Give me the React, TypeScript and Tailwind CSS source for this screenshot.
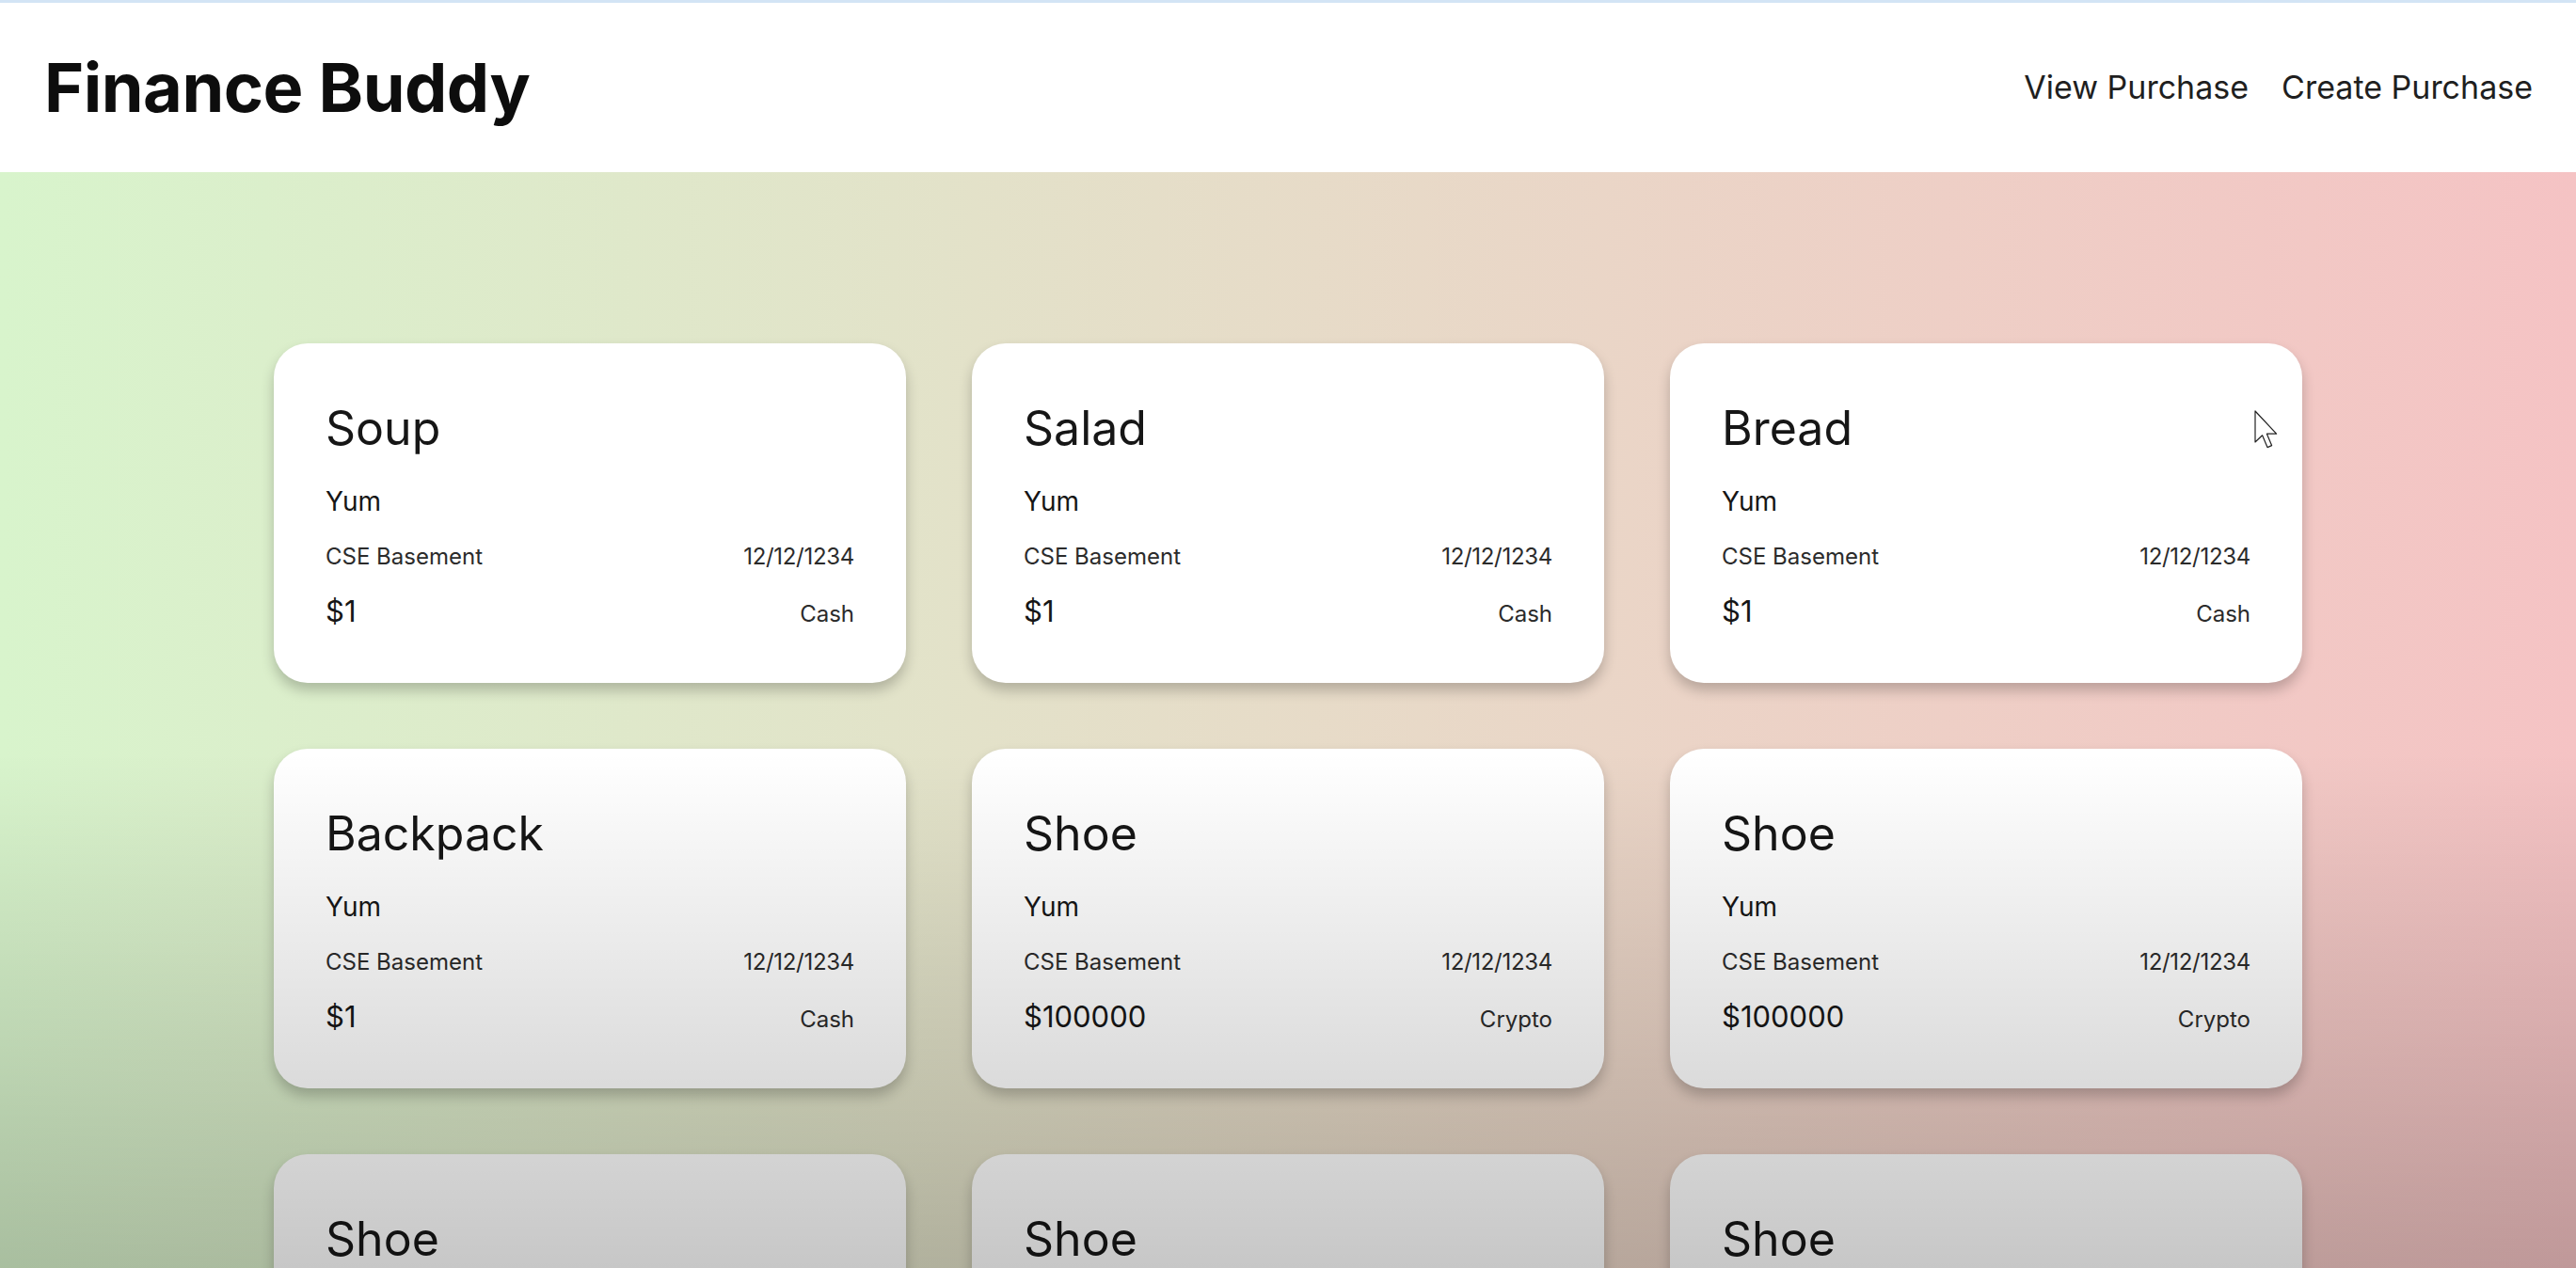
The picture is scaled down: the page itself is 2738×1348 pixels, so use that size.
import React from 'react';

type Purchase = {
    id: number;
    name: string;
    description: string;
    location: string;
    date: string;
    amount: number;
    method: string;
};

const purchases: Purchase[] = [
    { id: 1, name: 'Soup', description: 'Yum', location: 'CSE Basement', date: '12/12/1234', amount: 1, method: 'Cash' },
    { id: 2, name: 'Salad', description: 'Yum', location: 'CSE Basement', date: '12/12/1234', amount: 1, method: 'Cash' },
    { id: 3, name: 'Bread', description: 'Yum', location: 'CSE Basement', date: '12/12/1234', amount: 1, method: 'Cash' },
    { id: 4, name: 'Backpack', description: 'Yum', location: 'CSE Basement', date: '12/12/1234', amount: 1, method: 'Cash' },
    { id: 5, name: 'Shoe', description: 'Yum', location: 'CSE Basement', date: '12/12/1234', amount: 100000, method: 'Crypto' },
    { id: 6, name: 'Shoe', description: 'Yum', location: 'CSE Basement', date: '12/12/1234', amount: 100000, method: 'Crypto' },
    { id: 7, name: 'Shoe', description: 'Yum', location: 'CSE Basement', date: '12/12/1234', amount: 100000, method: 'Crypto' },
    { id: 8, name: 'Shoe', description: 'Yum', location: 'CSE Basement', date: '12/12/1234', amount: 100000, method: 'Crypto' },
    { id: 9, name: 'Shoe', description: 'Yum', location: 'CSE Basement', date: '12/12/1234', amount: 100000, method: 'Crypto' },
];

const PurchaseCard: React.FC<{ purchase: Purchase }> = ({ purchase }) => (
    <div className="h-[361px] rounded-[36px] bg-white px-[55px] pt-[65px] text-[#161616] shadow-[0_8px_14px_rgba(0,0,0,0.22)]">
        <h2 className="text-[50px] leading-none">{purchase.name}</h2>
        <p className="mt-[39px] text-[28px] leading-none">{purchase.description}</p>
        <div className="mt-[33px] flex justify-between text-[24px] leading-none text-[#2b2b2b]">
            <span>{purchase.location}</span>
            <span className="tracking-[-0.3px]">{purchase.date}</span>
        </div>
        <div className="mt-[30px] flex items-baseline justify-between leading-none">
            <span className="text-[31px]">${purchase.amount}</span>
            <span className="text-[24px] text-[#2b2b2b]">{purchase.method}</span>
        </div>
    </div>
);

const App: React.FC = () => {
    return (
        <div className="relative h-screen overflow-hidden bg-[linear-gradient(to_right,#d8f4cc,#f5c3c4)] font-['Inter',sans-serif]">
            <header className="flex h-[183px] items-center justify-between border-t-[3px] border-[#d3e4f5] bg-white pl-[47px] pr-[46px]">
                <h1 className="text-[72px] font-bold leading-none tracking-[-0.5px] text-[#0d0d0d]">Finance Buddy</h1>
                <nav className="flex items-center gap-[35px] text-[34px] leading-none text-[#1f1f1f]">
                    <a href="#">View Purchase</a>
                    <a href="#">Create Purchase</a>
                </nav>
            </header>

            <main className="flex justify-center pt-[182px]">
                <div className="grid w-[2156px] grid-cols-3 gap-[70px]">
                    {purchases.map(p => (
                        <PurchaseCard key={p.id} purchase={p} />
                    ))}
                </div>
            </main>

            {/* mouse pointer */}
            <svg className="pointer-events-none absolute left-[2396px] top-[436px]" width="26" height="42" viewBox="0 0 13 21">
                <path d="M0.5 0.5 L0.5 17 L4.3 13.4 L7 19.8 L9.3 18.8 L6.7 12.6 L11.8 12.6 Z" fill="#fff" stroke="#222" strokeWidth="0.6" strokeLinejoin="round" />
            </svg>

            {/* player shade at the bottom */}
            <div className="pointer-events-none absolute inset-x-0 bottom-0 top-[800px] bg-[linear-gradient(to_bottom,rgba(0,0,0,0),rgba(0,0,0,0.22))]" />
        </div>
    );
};

export default App;
